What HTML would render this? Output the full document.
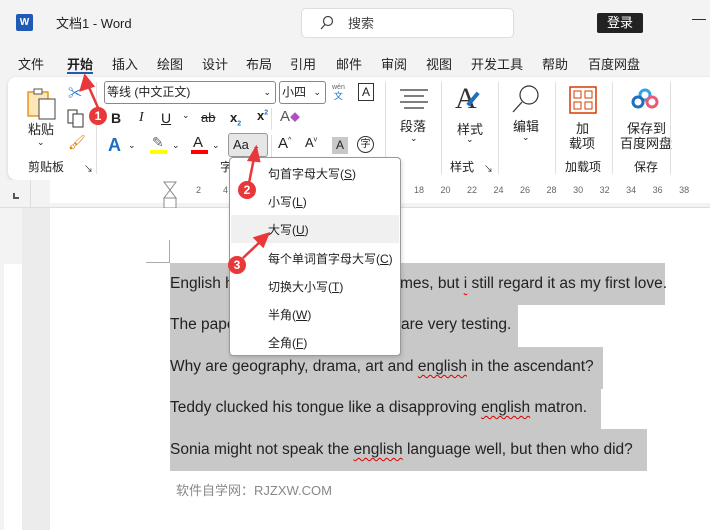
<!DOCTYPE html>
<html><head><meta charset="utf-8"><style>
*{margin:0;padding:0;box-sizing:border-box}
body{width:710px;height:530px;overflow:hidden;background:#f3f3f3;font-family:"Liberation Sans","Noto Sans CJK SC",sans-serif;position:relative;color:#222}
.a{position:absolute;white-space:nowrap}
.t{font-size:13px}
.sep{position:absolute;width:1px;background:#e0e0e0}
.hl{position:absolute;background:#c8c8c8}
.line{position:absolute;left:170px;font-size:15.5px;color:#222;white-space:nowrap}
.sq{text-decoration:underline wavy #d00;text-decoration-thickness:1px;text-underline-offset:3px}
.mi{position:absolute;left:38px;font-size:12px;color:#222}
.badge{position:absolute;width:18px;height:18px;border-radius:50%;background:#e8383a;color:#fff;font-size:12px;font-weight:bold;text-align:center;line-height:18px}
</style></head><body>
<div class="a" style="left:16px;top:14px;width:17px;height:17px;background:#1f5bb5;border-radius:2px;color:#fff;font-size:10px;font-weight:bold;text-align:center;line-height:17px">W</div>
<div class="a t" style="left:56px;top:13px;font-size:13px">文档1 - Word</div>
<div class="a" style="left:301px;top:8px;width:213px;height:30px;background:#fff;border:1px solid #ddd;border-radius:5px"></div>
<svg class="a" style="left:318px;top:14px" width="18" height="18"><circle cx="10" cy="7" r="4.5" fill="none" stroke="#444" stroke-width="1.2"/><path d="M7 10.5L3 15" stroke="#444" stroke-width="1.3"/></svg>
<div class="a t" style="left:348px;top:13px;color:#444">搜索</div>
<div class="a" style="left:597px;top:13px;width:46px;height:20px;background:#222;color:#fff;font-size:13px;text-align:center;line-height:20px;border-radius:2px">登录</div>
<div class="a" style="left:692px;top:10px;font-size:14px">—</div>
<div class="a t" style="left:18px;top:54px">文件</div>
<div class="a t" style="left:67px;top:54px;font-weight:bold">开始</div>
<div class="a" style="left:67px;top:72px;width:26px;height:2px;background:#1f5bb5"></div>
<div class="a t" style="left:112px;top:54px">插入</div>
<div class="a t" style="left:157px;top:54px">绘图</div>
<div class="a t" style="left:202px;top:54px">设计</div>
<div class="a t" style="left:246px;top:54px">布局</div>
<div class="a t" style="left:290px;top:54px">引用</div>
<div class="a t" style="left:336px;top:54px">邮件</div>
<div class="a t" style="left:381px;top:54px">审阅</div>
<div class="a t" style="left:426px;top:54px">视图</div>
<div class="a t" style="left:471px;top:54px">开发工具</div>
<div class="a t" style="left:542px;top:54px">帮助</div>
<div class="a t" style="left:588px;top:54px">百度网盘</div>
<div class="a" style="left:8px;top:77px;width:710px;height:103px;background:#fff;border-radius:8px;box-shadow:0 1px 3px rgba(0,0,0,.15)"></div>
<svg class="a" style="left:26px;top:86px" width="34" height="34"><rect x="2" y="6" width="20" height="24" fill="#fde6b8" stroke="#e08a00" stroke-width="1.3"/><rect x="8" y="3" width="8" height="5" fill="#fff" stroke="#555"/><rect x="13" y="13" width="16" height="20" fill="#fff" stroke="#444"/></svg>
<div class="a t" style="left:28px;top:119px">粘贴</div>
<div class="a" style="left:37px;top:137px;font-size:9px">⌄</div>
<div class="a" style="left:68px;top:83px;color:#1e6fc0;font-size:14px">✂</div>
<svg class="a" style="left:67px;top:109px" width="18" height="20"><rect x="1" y="1" width="9" height="13" fill="none" stroke="#333"/><rect x="6" y="5" width="10" height="13" fill="#fff" stroke="#333"/></svg>
<div class="a" style="left:68px;top:134px;color:#e07b00;font-size:14px">🖌</div>
<div class="a" style="left:28px;top:158px;font-size:12px">剪贴板</div>
<div class="a" style="left:84px;top:162px;font-size:9px">↘</div>
<div class="sep" style="left:96px;top:82px;height:92px"></div>
<div class="a" style="left:104px;top:81px;width:172px;height:23px;border:1px solid #888;border-radius:3px;font-size:12px;line-height:21px;padding-left:2px">等线 (中文正文)<span style="position:absolute;right:4px;font-size:9px">⌄</span></div>
<div class="a" style="left:279px;top:81px;width:47px;height:23px;border:1px solid #888;border-radius:3px;font-size:12px;line-height:21px;padding-left:2px">小四<span style="position:absolute;right:4px;font-size:9px">⌄</span></div>
<div class="a" style="left:332px;top:83px;font-size:7px;color:#666;line-height:9px;text-align:center">wén<br><span style="color:#1e6fc0;font-size:9px">文</span></div>
<div class="a" style="left:358px;top:83px;width:16px;height:18px;border:1px solid #333;font-size:12px;text-align:center;line-height:16px">A</div>
<div class="a" style="left:111px;top:110px;font-weight:bold;font-size:14px">B</div>
<div class="a" style="left:139px;top:110px;font-style:italic;font-size:14px;font-family:'Liberation Serif',serif">I</div>
<div class="a" style="left:161px;top:110px;font-size:14px;text-decoration:underline">U</div>
<div class="a" style="left:182px;top:110px;font-size:9px">⌄</div>
<div class="a" style="left:201px;top:110px;font-size:13px;text-decoration:line-through">ab</div>
<div class="a" style="left:230px;top:110px;font-size:13px;font-weight:bold">x<sub style="font-size:7px;color:#1e6fc0">2</sub></div>
<div class="a" style="left:257px;top:108px;font-size:13px;font-weight:bold">x<sup style="font-size:7px;color:#1e6fc0">2</sup></div>
<div class="sep" style="left:271px;top:108px;height:22px"></div>
<div class="a" style="left:280px;top:108px;font-size:15px;color:#555">A<span style="color:#b04fc0;font-size:10px">◆</span></div>
<div class="a" style="left:108px;top:135px;font-size:18px;font-weight:bold;color:#1e6fc0">A</div>
<div class="a" style="left:128px;top:140px;font-size:9px">⌄</div>
<div class="a" style="left:152px;top:134px;font-size:14px;color:#666">✎</div>
<div class="a" style="left:150px;top:150px;width:17px;height:4px;background:#ffff00"></div>
<div class="a" style="left:172px;top:140px;font-size:9px">⌄</div>
<div class="a" style="left:193px;top:134px;font-size:15px">A</div>
<div class="a" style="left:191px;top:150px;width:17px;height:4px;background:#f00"></div>
<div class="a" style="left:212px;top:140px;font-size:9px">⌄</div>
<div class="a" style="left:228px;top:133px;width:40px;height:24px;background:#e6e6e6;border:1px solid #999;border-radius:3px;font-size:13px;line-height:22px;padding-left:4px">Aa <span style="font-size:9px">⌄</span></div>
<div class="sep" style="left:271px;top:135px;height:22px"></div>
<div class="a" style="left:278px;top:135px;font-size:15px">A<sup style="font-size:7px">^</sup></div>
<div class="a" style="left:305px;top:135px;font-size:13px">A<sup style="font-size:7px">v</sup></div>
<div class="a" style="left:332px;top:137px;width:16px;height:17px;background:#c8c8c8;font-size:12px;text-align:center;line-height:17px">A</div>
<div class="a" style="left:357px;top:136px;width:17px;height:17px;border:1px solid #333;border-radius:50%;font-size:10px;text-align:center;line-height:15px">字</div>
<div class="a" style="left:220px;top:158px;font-size:12px">字</div>
<div class="sep" style="left:385px;top:82px;height:92px"></div>
<svg class="a" style="left:398px;top:86px" width="32" height="26"><path d="M2 4H30M6 10H26M2 16H30M6 22H26" stroke="#333" stroke-width="1.3"/></svg>
<div class="a t" style="left:400px;top:116px">段落</div>
<div class="a" style="left:410px;top:133px;font-size:9px">⌄</div>
<div class="sep" style="left:441px;top:82px;height:92px"></div>
<div class="a" style="left:455px;top:82px;font-size:30px;font-family:'Liberation Serif',serif;color:#333">A</div>
<div class="a" style="left:465px;top:97px;width:16px;height:4px;background:#1e6fc0;transform:rotate(-50deg)"></div>
<div class="a t" style="left:457px;top:119px">样式</div>
<div class="a" style="left:466px;top:134px;font-size:9px">⌄</div>
<div class="a" style="left:450px;top:158px;font-size:12px">样式</div>
<div class="a" style="left:484px;top:162px;font-size:9px">↘</div>
<div class="sep" style="left:498px;top:82px;height:92px"></div>
<svg class="a" style="left:510px;top:83px" width="32" height="32"><circle cx="19" cy="12" r="9" fill="none" stroke="#333" stroke-width="1.2"/><path d="M12 19L3 29" stroke="#333" stroke-width="1.3"/></svg>
<div class="a t" style="left:513px;top:116px">编辑</div>
<div class="a" style="left:522px;top:132px;font-size:9px">⌄</div>
<div class="sep" style="left:555px;top:82px;height:92px"></div>
<svg class="a" style="left:569px;top:86px" width="28" height="28"><rect x="1" y="1" width="26" height="26" fill="none" stroke="#d83b01" stroke-width="1.5"/><rect x="5" y="5" width="7" height="7" fill="none" stroke="#d83b01"/><rect x="16" y="5" width="7" height="7" fill="none" stroke="#d83b01"/><rect x="5" y="16" width="7" height="7" fill="none" stroke="#d83b01"/><rect x="16" y="16" width="7" height="7" fill="none" stroke="#d83b01"/></svg>
<div class="a t" style="left:576px;top:118px">加</div>
<div class="a t" style="left:569px;top:133px">载项</div>
<div class="a" style="left:565px;top:158px;font-size:12px">加载项</div>
<div class="sep" style="left:612px;top:82px;height:92px"></div>
<svg class="a" style="left:631px;top:88px" width="28" height="22"><circle cx="14" cy="7" r="5" fill="none" stroke="#2fa3e6" stroke-width="3"/><circle cx="7" cy="14" r="5" fill="none" stroke="#1e6fc0" stroke-width="3"/><circle cx="21" cy="14" r="5" fill="none" stroke="#e85a7a" stroke-width="3"/></svg>
<div class="a t" style="left:627px;top:118px">保存到</div>
<div class="a t" style="left:620px;top:133px">百度网盘</div>
<div class="a" style="left:634px;top:158px;font-size:12px">保存</div>
<div class="sep" style="left:670px;top:82px;height:92px"></div>
<div class="a" style="left:0;top:180px;width:710px;height:28px;background:#f3f3f3;border-bottom:1px solid #ddd"></div>
<div class="a" style="left:30px;top:180px;width:1px;height:350px;background:#ddd"></div>
<div class="a" style="left:50px;top:180px;width:660px;height:23px;background:#fff"></div>
<div class="a" style="left:13px;top:193px;width:6px;height:6px;border-left:2px solid #555;border-bottom:2px solid #555"></div>
<svg class="a" style="left:163px;top:181px" width="14" height="28"><path d="M1 1H13L7 9ZM7 9L1 17H13Z M1 17V27H13V17" fill="#fff" stroke="#888"/></svg>
<div class="a" style="left:196px;top:185px;font-size:9px;color:#666">2</div>
<div class="a" style="left:223px;top:185px;font-size:9px;color:#666">4</div>
<div class="a" style="left:414px;top:185px;font-size:9px;color:#666;word-spacing:14px">18 20 22 24 26 28 30 32 34 36 38</div>
<div class="a" style="left:0;top:208px;width:22px;height:322px;background:#f3f3f3"></div>
<div class="a" style="left:4px;top:264px;width:18px;height:266px;background:#fff"></div>
<div class="a" style="left:22px;top:208px;width:28px;height:322px;background:#ececec"></div>
<div class="a" style="left:50px;top:208px;width:660px;height:322px;background:#fff"></div>
<div class="a" style="left:146px;top:262px;width:24px;height:1px;background:#aaa"></div>
<div class="a" style="left:169px;top:240px;width:1px;height:22px;background:#aaa"></div>
<div class="hl" style="left:170px;top:263px;width:495px;height:42px"></div>
<div class="hl" style="left:170px;top:305px;width:348px;height:42px"></div>
<div class="hl" style="left:170px;top:347px;width:433px;height:42px"></div>
<div class="hl" style="left:170px;top:389px;width:431px;height:42px"></div>
<div class="hl" style="left:170px;top:429px;width:477px;height:42px"></div>
<div class="line" style="top:275px">English h</div>
<div class="line" style="top:275px;left:400px">mes, but <span class="sq">i</span> still regard it as my first love.</div>
<div class="line" style="top:316px">The pape</div>
<div class="line" style="top:316px;left:401px">are very testing.</div>
<div class="line" style="top:358px">Why are geography, drama, art and <span class="sq">english</span> in the ascendant?</div>
<div class="line" style="top:399px">Teddy clucked his tongue like a disapproving <span class="sq">english</span> matron.</div>
<div class="line" style="top:441px">Sonia might not speak the <span class="sq">english</span> language well, but then who did?</div>
<div class="a" style="left:176px;top:480px;font-size:13px;color:#888">软件自学网：RJZXW.COM</div>
<div class="a" style="left:229px;top:157px;width:172px;height:199px;background:#fff;border:1px solid #999;border-radius:4px;box-shadow:1px 2px 4px rgba(0,0,0,.15)">
<div class="a" style="left:1px;top:57px;width:168px;height:28px;background:#f0f0f0"></div>
<div class="mi" style="top:7px">句首字母大写(<u>S</u>)</div>
<div class="mi" style="top:35px">小写(<u>L</u>)</div>
<div class="mi" style="top:63px">大写(<u>U</u>)</div>
<div class="mi" style="top:92px">每个单词首字母大写(<u>C</u>)</div>
<div class="mi" style="top:120px">切换大小写(<u>T</u>)</div>
<div class="mi" style="top:148px">半角(<u>W</u>)</div>
<div class="mi" style="top:176px">全角(<u>F</u>)</div>
</div>
<svg class="a" style="left:0;top:0" width="710" height="530">
<g stroke="#e8383a" stroke-width="2.5" fill="#e8383a">
<path d="M99 110L88 85"/><path d="M85 76L81 90L93 86Z"/>
<path d="M249 183L254 158"/><path d="M256 148L249 160L259 161Z"/>
<path d="M243 258L262 240"/><path d="M268 234L255 238L263 246Z"/>
</g></svg>
<div class="badge" style="left:89px;top:107px">1</div>
<div class="badge" style="left:238px;top:181px">2</div>
<div class="badge" style="left:228px;top:256px">3</div>
</body></html>
